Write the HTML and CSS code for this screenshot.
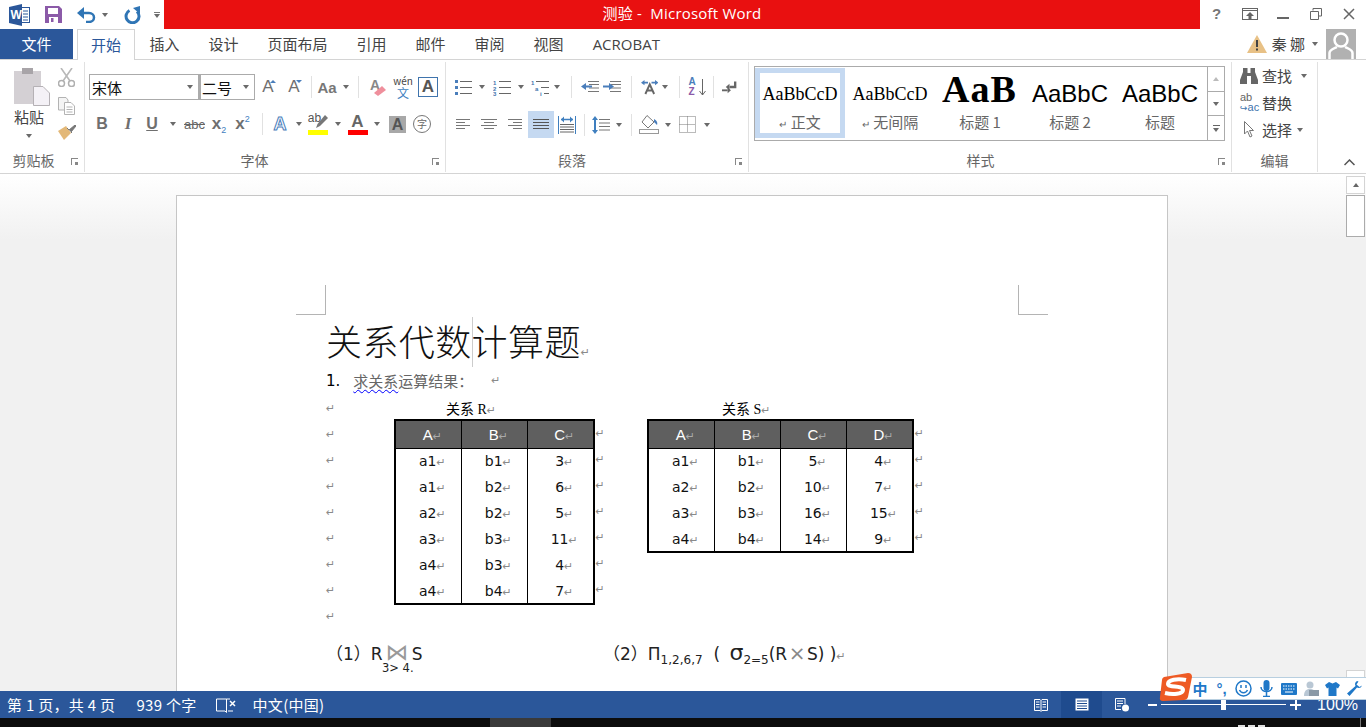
FILE: index.html
```html
<!DOCTYPE html>
<html lang="zh-CN">
<head>
<meta charset="UTF-8">
<title>测验 - Microsoft Word</title>
<link rel="stylesheet" href="styles.css">
</head>
<body>

<!-- title bar -->
<header class="titlebar">
  <div class="qat">
    <svg class="qat-word" width="22" height="22" viewBox="0 0 22 22"><rect x="8.5" y="3.5" width="12" height="15" fill="#fff" stroke="#2b579a"/><path d="M14 7h5M14 10h5M14 13h5M14 16h5" stroke="#2b579a"/><path d="M0 3L13 0V22L0 19Z" fill="#2b579a"/><text x="1.5" y="15" class="qat-w">W</text></svg>
    <svg class="qat-save" width="17" height="17" viewBox="0 0 17 17"><path d="M0 0H14L17 3V17H0Z" fill="#8b5aa8"/><rect x="3" y="2" width="10" height="6" fill="#fff"/><rect x="4" y="11" width="9" height="6" fill="#fff"/><rect x="6" y="12" width="2.500" height="4" fill="#8b5aa8"/></svg>
    <svg class="qat-undo" width="19" height="16" viewBox="0 0 19 16"><path d="M2 6H12C15 6 17 8 17 10.500C17 13 15 15 12 15H9" fill="none" stroke="#2f75b5" stroke-width="2.500"/><path d="M7 0V12L0 6Z" fill="#2f75b5"/></svg>
    <i class="caret qat-caret"></i>
    <svg class="qat-redo" width="17" height="18" viewBox="0 0 17 18"><path d="M5.500 4.500A6.500 6.500 0 1 0 13 5.500" fill="none" stroke="#2f75b5" stroke-width="3"/><path d="M9 2L16 0V8Z" fill="#2f75b5"/></svg>
    <span class="qat-more"><b></b><i class="caret"></i></span>
  </div>
  <div class="title-text">测验 -&nbsp; Microsoft Word</div>
  <div class="winbtns">
    <span class="winbtn win-help">?</span>
    <span class="winbtn"><svg width="16" height="12" viewBox="0 0 16 12"><rect x=".5" y=".5" width="15" height="11" fill="none" stroke="#666"/><path d="M1 2.500H15" stroke="#666"/><path d="M8 4L12 8H9.500V11H6.500V8H4Z" fill="#666"/></svg></span>
    <span class="winbtn"><svg width="12" height="12" viewBox="0 0 12 12"><rect y="9" width="12" height="2" fill="#666"/></svg></span>
    <span class="winbtn"><svg width="12" height="12" viewBox="0 0 12 12"><path d="M3 2.500V.5H11.500V8H9M.5 3.500H8.500V11.500H.5Z" fill="none" stroke="#666"/></svg></span>
    <span class="winbtn"><svg width="12" height="12" viewBox="0 0 12 12"><path d="M1 1L11 11M11 1L1 11" stroke="#666" stroke-width="1.500"/></svg></span>
  </div>
</header>

<!-- tabs -->
<nav class="tabbar">
  <span class="tab-file">文件</span>
  <span class="tab tab-active">开始</span>
  <span class="tab">插入</span>
  <span class="tab">设计</span>
  <span class="tab">页面布局</span>
  <span class="tab">引用</span>
  <span class="tab">邮件</span>
  <span class="tab">审阅</span>
  <span class="tab">视图</span>
  <span class="tab tab-latin">ACROBAT</span>
  <div class="account">
    <svg width="20" height="18" viewBox="0 0 20 18"><path d="M10 0L20 18H0Z" fill="#e8c186"/><rect x="9" y="5" width="2" height="7" fill="#444"/><rect x="9" y="13.500" width="2" height="2" fill="#444"/></svg>
    <span class="account-name">秦 娜</span>
    <i class="caret"></i>
    <svg class="avatar" width="30" height="30" viewBox="0 0 30 30"><rect width="30" height="30" fill="#b1b1b1"/><circle cx="15" cy="11" r="6.500" fill="none" stroke="#fff" stroke-width="2.500"/><path d="M3.500 30V24C3.500 20.500 8 19.500 11 18M26.500 30V24C26.500 20.500 22 19.500 19 18" fill="none" stroke="#fff" stroke-width="2.500"/></svg>
  </div>
</nav>

<!-- ribbon -->
<section class="ribbon">

  <div class="group group-clip">
    <div class="clip-body">
      <div class="paste">
        <svg width="36" height="38" viewBox="0 0 36 38"><rect x="0" y="3" width="27" height="33" fill="#d4d0d4"/><rect x="8" y="0" width="11" height="6" fill="#a8a4a8"/><path d="M19.500 18.500H29L35.500 25V37.500H19.500Z" fill="#f4f1f6" stroke="#b5b1b5"/></svg>
        <span class="paste-label">粘贴</span>
        <i class="caret"></i>
      </div>
      <div class="clip-tools">
        <svg width="17" height="19" viewBox="0 0 17 19"><path d="M3 0L12 13M14 0L5 13" stroke="#b8b8b8" stroke-width="1.600"/><circle cx="3.500" cy="15.500" r="3" fill="none" stroke="#b0b0b0" stroke-width="1.500"/><circle cx="13.500" cy="15.500" r="3" fill="none" stroke="#b0b0b0" stroke-width="1.500"/></svg>
        <svg width="17" height="18" viewBox="0 0 17 18"><path d="M.5.500H8L10 3V13H.5Z" fill="#f4f4f4" stroke="#b3b3b3"/><path d="M6.500 5.500H13L16.500 9V17.500H6.500Z" fill="#fff" stroke="#b3b3b3"/><path d="M8.500 10H14.500M8.500 12.500H14.500M8.500 15H14.500" stroke="#b3b3b3"/></svg>
        <svg width="18" height="15" viewBox="0 0 18 15"><path d="M0 6L8 1L13 8L6 15Z" fill="#e3b878"/><path d="M9 3L11 5L17 0L18 1L13 7L14 8" fill="#777" stroke="#777"/></svg>
      </div>
    </div>
    <div class="group-foot">剪贴板<i class="launcher"></i></div>
  </div>

  <div class="group group-font">
    <div class="tools">
      <div class="row font-row1">
        <div class="combo combo-name"><span>宋体</span><i class="caret"></i></div>
        <div class="combo combo-size"><span>二号</span><i class="caret"></i></div>
        <span class="cell fmt fmt-grow up">A</span>
        <span class="cell fmt fmt-grow down">A</span>
        <span class="cell"><i class="sep"></i></span>
        <span class="cell fmt fmt-aa">Aa</span>
        <span class="cell"><i class="caret"></i></span>
        <span class="cell"><i class="sep"></i></span>
        <span class="cell"><svg width="17" height="19" viewBox="0 0 17 19"><text x="1" y="12" class="svg-a">A</text><path d="M5 15L13 8L17 12L9 18Z" fill="#ef8f9c"/></svg></span>
        <span class="cell wen"><span class="wen-top">wén</span><span class="wen-bot">文</span></span>
        <span class="cell"><span class="fmt fmt-boxa">A</span></span>
      </div>
      <div class="row font-row2">
        <span class="cell fmt fmt-b">B</span>
        <span class="cell fmt fmt-i">I</span>
        <span class="cell fmt fmt-u">U</span>
        <span class="cell"><i class="caret"></i></span>
        <span class="cell fmt-abc">abc</span>
        <span class="cell"><span class="fmt fmt-x">x<sub class="fmt-sub">2</sub></span></span>
        <span class="cell"><span class="fmt fmt-x">x<sup class="fmt-sub">2</sup></span></span>
        <span class="cell"><i class="sep"></i></span>
        <span class="cell fmt fmt-effect">A</span>
        <span class="cell"><i class="caret"></i></span>
        <span class="cell colored"><span class="fmt-ab">ab</span><i class="swatch swatch-y"></i><svg class="pen" width="12" height="13" viewBox="0 0 12 13"><path d="M9 0L12 3L4 11L0 13L1.500 9Z" fill="#777"/></svg></span>
        <span class="cell"><i class="caret"></i></span>
        <span class="cell colored"><span class="fmt fmt-colora">A</span><i class="swatch swatch-r"></i></span>
        <span class="cell"><i class="caret"></i></span>
        <span class="cell"><span class="fmt fmt-shade">A</span></span>
        <span class="cell"><span class="fmt-char">字</span></span>
      </div>
    </div>
    <div class="group-foot">字体<i class="launcher"></i></div>
  </div>

  <div class="group group-para">
    <div class="tools">
      <div class="row para-row1">
        <span class="cell"><svg width="18" height="17" viewBox="0 0 18 17"><path d="M1 1h3v3h-3zM1 7h3v3h-3zM1 13h3v3h-3z" fill="#4a7ebb"/><path d="M6 2.500H18M6 8.500H18M6 14.500H18" stroke="#666"/></svg></span>
        <span class="cell"><i class="caret"></i></span>
        <span class="cell"><svg width="18" height="17" viewBox="0 0 18 17"><text x="0" y="6" class="svg-n">1</text><text x="0" y="11.500" class="svg-n">2</text><text x="0" y="17" class="svg-n">3</text><path d="M6 2.500H18M6 8.500H18M6 14.500H18" stroke="#666"/></svg></span>
        <span class="cell"><i class="caret"></i></span>
        <span class="cell"><svg width="18" height="17" viewBox="0 0 18 17"><text x="0" y="6" class="svg-n">1</text><text x="4" y="11.500" class="svg-n">a</text><text x="9" y="17" class="svg-n">i</text><path d="M5 2.500H18M10 8.500H18M13 14.500H18" stroke="#666"/></svg></span>
        <span class="cell"><i class="caret"></i></span>
        <span class="cell"><i class="sep"></i></span>
        <span class="cell"><svg width="18" height="12" viewBox="0 0 18 12"><path d="M7 .5H18M8 3.500H18M8 7H18M7 10.500H18" stroke="#777"/><path d="M0 5.500L5 2V4.500H11V6.500H5V9Z" fill="#4a7ebb"/></svg></span>
        <span class="cell"><svg width="18" height="12" viewBox="0 0 18 12"><path d="M7 .5H18M8 3.500H18M8 7H18M7 10.500H18" stroke="#777"/><path d="M11 5.500L6 2V4.500H0V6.500H6V9Z" fill="#4a7ebb"/></svg></span>
        <span class="cell"><i class="sep"></i></span>
        <span class="cell"><svg width="20" height="16" viewBox="0 0 20 16"><path d="M5 16L10 5L15 16M7 12H13" fill="none" stroke="#666" stroke-width="2.200"/><path d="M0 3L4 0V2H8V4H4V6ZM20 3L16 0V2H12V4H16V6Z" fill="#4a7ebb"/></svg></span>
        <span class="cell"><i class="caret"></i></span>
        <span class="cell"><i class="sep"></i></span>
        <span class="cell sort"><span class="sort-a">A</span><span class="sort-z">Z</span><svg width="7" height="17" viewBox="0 0 7 17"><path d="M3.500 0V16M.5 12L3.500 16L6.500 12" fill="none" stroke="#666"/></svg></span>
        <span class="cell"><i class="sep"></i></span>
        <span class="cell"><svg width="17" height="13" viewBox="0 0 17 13"><path d="M14 0V6H8" fill="none" stroke="#666" stroke-width="2.500"/><path d="M8 2.500V9.500L4 6Z" fill="#666"/><path d="M0 9.500H6" stroke="#666" stroke-width="2"/><path d="M6 6.500V12.500L9.500 9.500Z" fill="#666"/></svg></span>
      </div>
      <div class="row para-row2">
        <span class="cell"><svg width="14" height="11" viewBox="0 0 14 11"><path d="M0 .5H14M0 3.500H9M0 6.500H14M0 9.500H9" stroke="#777"/></svg></span>
        <span class="cell"><svg width="16" height="11" viewBox="0 0 16 11"><path d="M0 .5H16M3 3.500H13M0 6.500H16M3 9.500H13" stroke="#777"/></svg></span>
        <span class="cell"><svg width="14" height="11" viewBox="0 0 14 11"><path d="M0 .5H14M5 3.500H14M0 6.500H14M5 9.500H14" stroke="#777"/></svg></span>
        <span class="cell cell-on"><svg width="16" height="12" viewBox="0 0 16 12"><path d="M0 .5H16M0 3.500H16M0 6.500H16M0 9.500H16" stroke="#555"/></svg></span>
        <span class="cell"><svg width="18" height="18" viewBox="0 0 18 18"><path d="M.5 0V18M17.500 0V18" stroke="#3f7fbf"/><path d="M3 3.500H15" stroke="#3f7fbf" stroke-width="1.500"/><path d="M3 3.500L6 .5V6.500ZM15 3.500L12 .5V6.500Z" fill="#3f7fbf"/><path d="M2 8.500H16M2 11H16M2 13.500H16M2 16H16" stroke="#666"/></svg></span>
        <span class="cell"><i class="sep"></i></span>
        <span class="cell"><svg width="18" height="18" viewBox="0 0 18 18"><path d="M7 3.500H18M7 7H18M7 10.500H18M7 14H18" stroke="#777"/><path d="M3 0L6 4H4V14H6L3 18L0 14H2V4H0Z" fill="#3f7fbf"/></svg></span>
        <span class="cell"><i class="caret"></i></span>
        <span class="cell"><i class="sep"></i></span>
        <span class="cell"><svg width="20" height="19" viewBox="0 0 20 19"><path d="M8 .5L15 7L9 13L3 7Z" fill="#fff" stroke="#777"/><path d="M15 4C17 5 19 7 18 10L15 7Z" fill="#4a7ebb"/><rect x=".5" y="14.500" width="19" height="4" fill="#fff" stroke="#999"/></svg></span>
        <span class="cell"><i class="caret"></i></span>
        <span class="cell"><svg width="17" height="17" viewBox="0 0 17 17"><path d="M.5.5H16.500V16.500H.5ZM8.500.5V16.500M.5 8.500H16.500" fill="none" stroke="#777" stroke-dasharray="1 1"/></svg></span>
        <span class="cell"><i class="caret"></i></span>
      </div>
    </div>
    <div class="group-foot">段落<i class="launcher"></i></div>
  </div>

  <div class="group group-style">
    <div class="gallery">
      <div class="style-item style-on"><span class="st-sample st-serif">AaBbCcD</span><span class="st-name"><i class="st-mark">↵</i> 正文</span></div>
      <div class="style-item"><span class="st-sample st-serif">AaBbCcD</span><span class="st-name"><i class="st-mark">↵</i> 无间隔</span></div>
      <div class="style-item"><span class="st-sample st-h1">AaB</span><span class="st-name">标题 1</span></div>
      <div class="style-item"><span class="st-sample st-sans">AaBbC</span><span class="st-name">标题 2</span></div>
      <div class="style-item"><span class="st-sample st-sans">AaBbC</span><span class="st-name">标题</span></div>
      <div class="gallery-scroll">
        <span class="gs-btn"><i class="caret caret-up"></i></span>
        <span class="gs-btn"><i class="caret"></i></span>
        <span class="gs-btn gs-more"><b></b><i class="caret"></i></span>
      </div>
    </div>
    <div class="group-foot">样式<i class="launcher"></i></div>
  </div>

  <div class="group group-edit">
    <div class="edit-list">
      <div class="edit-row"><svg width="18" height="17" viewBox="0 0 18 17"><path d="M3 1H7.500V6H10.500V1H15V5L18 13V17H11V9H7V17H0V13L3 5Z" fill="#666"/></svg><span>查找</span><i class="caret caret-find"></i></div>
      <div class="edit-row"><span class="rep"><span>ab</span><span class="rep-ac"><i>↪</i>ac</span></span><span>替换</span></div>
      <div class="edit-row"><svg width="18" height="17" viewBox="0 0 18 17"><path d="M4.500 .5V13L7.500 10L10 16L12 15L9.500 9.500H13.500Z" fill="#fff" stroke="#777"/></svg><span>选择</span><i class="caret"></i></div>
    </div>
    <div class="group-foot">编辑</div>
  </div>

  <svg class="ribbon-collapse" width="11" height="7" viewBox="0 0 11 7"><path d="M.5 6L5.500 1L10.500 6" fill="none" stroke="#555" stroke-width="1.500"/></svg>
</section>

<!-- document -->
<main class="workspace">
  <div class="canvas">
    <article class="page">
      <i class="crop crop-left"></i>
      <i class="crop crop-right"></i>
      <i class="text-cursor"></i>

      <h1 class="doc-title">关系代数计算题<i class="pm">↵</i></h1>
      <p class="doc-line"><span class="doc-num">1.</span><span class="doc-q"><span class="spell">求关系</span>运算结果：</span><i class="pm">↵</i></p>

      <div class="relations">
        <div class="marks marks-left">
          <i class="pm">↵</i><i class="pm">↵</i><i class="pm">↵</i><i class="pm">↵</i><i class="pm">↵</i><i class="pm">↵</i><i class="pm">↵</i><i class="pm">↵</i><i class="pm">↵</i>
        </div>

        <div class="rel rel-r">
          <div class="rel-cap">关系 R<i class="pm">↵</i></div>
          <div class="rel-body">
            <table class="rel-table">
              <tr><th>A<i class="pm">↵</i></th><th>B<i class="pm">↵</i></th><th>C<i class="pm">↵</i></th></tr>
              <tr><td>a1<i class="pm">↵</i></td><td>b1<i class="pm">↵</i></td><td>3<i class="pm">↵</i></td></tr>
              <tr><td>a1<i class="pm">↵</i></td><td>b2<i class="pm">↵</i></td><td>6<i class="pm">↵</i></td></tr>
              <tr><td>a2<i class="pm">↵</i></td><td>b2<i class="pm">↵</i></td><td>5<i class="pm">↵</i></td></tr>
              <tr><td>a3<i class="pm">↵</i></td><td>b3<i class="pm">↵</i></td><td>11<i class="pm">↵</i></td></tr>
              <tr><td>a4<i class="pm">↵</i></td><td>b3<i class="pm">↵</i></td><td>4<i class="pm">↵</i></td></tr>
              <tr><td>a4<i class="pm">↵</i></td><td>b4<i class="pm">↵</i></td><td>7<i class="pm">↵</i></td></tr>
            </table>
            <div class="marks"><i class="pm">↵</i><i class="pm">↵</i><i class="pm">↵</i><i class="pm">↵</i><i class="pm">↵</i><i class="pm">↵</i><i class="pm">↵</i></div>
          </div>
        </div>

        <div class="rel rel-s">
          <div class="rel-cap">关系 S<i class="pm">↵</i></div>
          <div class="rel-body">
            <table class="rel-table">
              <tr><th>A<i class="pm">↵</i></th><th>B<i class="pm">↵</i></th><th>C<i class="pm">↵</i></th><th>D<i class="pm">↵</i></th></tr>
              <tr><td>a1<i class="pm">↵</i></td><td>b1<i class="pm">↵</i></td><td>5<i class="pm">↵</i></td><td>4<i class="pm">↵</i></td></tr>
              <tr><td>a2<i class="pm">↵</i></td><td>b2<i class="pm">↵</i></td><td>10<i class="pm">↵</i></td><td>7<i class="pm">↵</i></td></tr>
              <tr><td>a3<i class="pm">↵</i></td><td>b3<i class="pm">↵</i></td><td>16<i class="pm">↵</i></td><td>15<i class="pm">↵</i></td></tr>
              <tr><td>a4<i class="pm">↵</i></td><td>b4<i class="pm">↵</i></td><td>14<i class="pm">↵</i></td><td>9<i class="pm">↵</i></td></tr>
            </table>
            <div class="marks"><i class="pm">↵</i><i class="pm">↵</i><i class="pm">↵</i><i class="pm">↵</i><i class="pm">↵</i></div>
          </div>
        </div>
      </div>

      <div class="formulas">
        <div class="formula-a">
          <span>（1）R<span class="bowtie">⋈</span>S</span>
          <span class="formula-sub">3&gt; 4.</span>
        </div>
        <div class="formula-b">（2）Π<sub>1,2,6,7</sub>&nbsp;&nbsp;( <span class="sigma">σ</span><sub>2=5</sub>(R<span class="times">×</span>S) )<i class="pm">↵</i></div>
      </div>
    </article>
  </div>

  <aside class="vscroll">
    <span class="vs-btn"><i class="caret caret-up"></i></span>
    <span class="vs-thumb"></span>
    <span class="vs-track"></span>
    <span class="vs-btn"><i class="caret"></i></span>
  </aside>
</main>

<!-- status bar -->
<footer class="statusbar">
  <span class="st-page">第 1 页，共 4 页</span>
  <span class="st-words">939 个字</span>
  <svg class="st-book" width="20" height="16" viewBox="0 0 20 16"><path d="M10.500 2H.5V14H9L10.500 15.500V2M10.500 2H14M17 14H12" fill="none" stroke="#fff"/><path d="M14 4L19 9M19 4L14 9" stroke="#fff" stroke-width="1.500"/></svg>
  <span class="st-lang">中文(中国)</span>
  <div class="st-right">
    <span class="view"><svg width="14" height="14" viewBox="0 0 14 14"><path d="M.5 1.500H6L7 2.500L8 1.500H13.500V12.500H8L7 13.500L6 12.500H.5ZM7 2.500V13M2 4H5.500M2 6.500H5.500M2 9H5.500M8.500 4H12M8.500 6.500H12M8.500 9H12" fill="none" stroke="#fff"/></svg></span>
    <span class="view view-on"><svg width="14" height="13" viewBox="0 0 14 13"><rect x=".5" y=".5" width="13" height="12" fill="#fff"/><path d="M2 3H12M2 5.500H12M2 8H12M2 10.500H12" stroke="#1f4b8e"/></svg></span>
    <span class="view"><svg width="15" height="14" viewBox="0 0 15 14"><path d="M.5.5H10V6M.5.5V11.500H6M2 3H8M2 5.500H8M2 8H6" fill="none" stroke="#fff"/><circle cx="10.500" cy="10" r="3.500" fill="#fff"/></svg></span>
    <span class="zoom-minus"></span>
    <span class="zoom-track"><i class="zoom-thumb"></i></span>
    <span class="zoom-plus"></span>
    <span class="zoom-val">100%</span>
  </div>
</footer>

<div class="taskbar"><span class="task-active"></span><span class="task-clock"><i></i><i></i><i></i></span><i class="task-show"></i></div>

<!-- floating IME bar -->
<div class="ime">
  <svg class="ime-logo" width="34" height="28" viewBox="0 0 34 28"><path d="M5 4L29 0Q33 0 33 4L29 24Q28 27 25 27L4 28Q0 28 1 24L3 7Q3 5 5 4Z" fill="#ee5a24"/><path d="M27 7C18 5 9 7 9 11C9 15 24 12 24 17C24 21 14 22 6 20" fill="none" stroke="#fff" stroke-width="4"/></svg>
  <div class="ime-bar">
    <span class="ime-cell ime-zh">中</span>
    <span class="ime-cell ime-punct">°,</span>
    <span class="ime-cell"><svg width="17" height="17" viewBox="0 0 17 17"><circle cx="8.500" cy="8.500" r="7.500" fill="none" stroke="#1f78c8" stroke-width="1.500"/><path d="M6 5V8M11 5V8" stroke="#1f78c8" stroke-width="1.500"/><path d="M4.500 10C6 13.500 11 13.500 12.500 10" fill="none" stroke="#1f78c8" stroke-width="1.500"/></svg></span>
    <span class="ime-cell"><svg width="13" height="17" viewBox="0 0 13 17"><rect x="3.500" width="6" height="11" rx="3" fill="#1f78c8"/><path d="M1 7C1 13 12 13 12 7M6.500 12V16M3 16.500H10" fill="none" stroke="#1f78c8" stroke-width="1.500"/></svg></span>
    <span class="ime-cell"><svg width="16" height="12" viewBox="0 0 16 12"><rect width="16" height="12" rx="1" fill="#1f78c8"/><path d="M2 3H14M2 6H14" stroke="#fff" stroke-dasharray="1.500 1"/><path d="M4 9H12" stroke="#fff"/></svg></span>
    <span class="ime-cell"><svg width="16" height="15" viewBox="0 0 16 15"><circle cx="7" cy="4" r="3.500" fill="#b9c7d4"/><path d="M1 15C1 9 4 8 7 8C10 8 13 9 13 15Z" fill="#b9c7d4"/><rect x="6" y="9" width="10" height="6" fill="#8a99a6"/></svg></span>
    <span class="ime-cell"><svg width="15" height="14" viewBox="0 0 15 14"><path d="M4 0L7.500 1.500L11 0L15 3L13 6.500L11.500 5.500V14H3.500V5.500L2 6.500L0 3Z" fill="#1f78c8"/></svg></span>
    <span class="ime-cell"><svg width="15" height="15" viewBox="0 0 15 15"><path d="M10 0C8 1 7.500 3 8.500 5L0 12.500L2.500 15L10 6.500C12 7.500 14 7 15 4.500L12.500 6L9.500 3.500L11.500 .5Z" fill="#1f78c8"/></svg></span>
  </div>
</div>

</body>
</html>
```

FILE: styles.css
```css
* { box-sizing: border-box; }

html, body { height: 100%; }

body {
	margin: 0;
	width: 1366px;
	height: 727px;
	overflow: hidden;
	display: flex;
	flex-direction: column;
	position: relative;
	background: #fff;
	color: #444;
	font-family: "Noto Sans CJK SC", "Liberation Sans", sans-serif;
	font-size: 14px;
}

i { font-style: normal; }

.caret {
	display: inline-block;
	width: 0;
	height: 0;
	border-left: 3.5px solid transparent;
	border-right: 3.5px solid transparent;
	border-top: 4px solid #6a6a6a;
	flex: none;
}

.caret-up {
	border-top: 0;
	border-bottom: 4px solid #bbb;
}

/* title bar */
.titlebar {
	height: 29px;
	flex: none;
	display: flex;
}

.qat {
	width: 164px;
	flex: none;
	display: flex;
	align-items: center;
}

.qat-word { margin-left: 9px; }
.qat-w { font: bold 12px "Liberation Sans", sans-serif; fill: #fff; }
.qat-save { margin-left: 14px; }
.qat-undo { margin-left: 15px; }
.qat-caret { margin-left: 6px; }
.qat-redo { margin-left: 16px; }

.qat-more {
	margin-left: 13px;
	display: flex;
	flex-direction: column;
	align-items: center;
	gap: 1px;
}

.qat-more b {
	display: block;
	width: 6px;
	height: 1px;
	background: #777;
}

.title-text {
	flex: 1;
	background: #e91010;
	color: #fff;
	text-align: center;
	font-family: "Open Sans", "Noto Sans CJK SC", sans-serif;
	font-size: 15px;
	letter-spacing: .2px;
	line-height: 27px;
}

.winbtns {
	width: 166px;
	flex: none;
	display: flex;
}

.winbtn {
	width: 33px;
	display: flex;
	align-items: center;
	justify-content: center;
	height: 27px;
}

.win-help {
	font: bold 15px "Liberation Sans", sans-serif;
	color: #777;
}

/* tabs */
.tabbar {
	height: 31px;
	flex: none;
	display: flex;
	align-items: stretch;
	border-bottom: 1px solid #d4d4d4;
	font-size: 15px;
	line-height: 30px;
}

.tab-file {
	width: 73px;
	margin-right: 4px;
	background: #2b579a;
	color: #fff;
	text-align: center;
}

.tab {
	padding: 0 14.5px;
	color: #444;
}

.tab-latin { font-family: "Open Sans", sans-serif; }

.tab-active {
	height: 31px;
	padding: 0 13px;
	background: #fff;
	color: #2b579a;
	border: 1px solid #d4d4d4;
	border-bottom: 0;
}

.account {
	margin-left: auto;
	margin-right: 10px;
	display: flex;
	align-items: center;
	gap: 5px;
	height: 30px;
}

.account-name { margin-right: 2px; font-size: 15px; }
.avatar { display: block; margin-left: 3px; }

/* ribbon */
.ribbon {
	height: 114px;
	flex: none;
	display: flex;
	position: relative;
	border-bottom: 1px solid #d4d4d4;
}

.group {
	display: flex;
	flex-direction: column;
	justify-content: space-between;
	height: 110px;
	margin-top: 2px;
	border-right: 1px solid #e1e1e1;
}

.group-clip { width: 85px; }
.group-font { width: 361px; }
.group-para { width: 303px; }
.group-style { width: 483px; padding-left: 5px; }
.group-edit { width: 86px; }

.group-foot {
	height: 22px;
	position: relative;
	text-align: center;
	font-size: 14px;
	line-height: 20px;
	color: #666;
}

.group-clip .group-foot { padding-right: 17px; }
.group-font .group-foot { padding-right: 21px; }
.group-para .group-foot { padding-right: 50px; }
.group-style .group-foot { padding-right: 24px; }

.launcher {
	position: absolute;
	right: 6px;
	top: 8px;
	width: 7px;
	height: 7px;
	border-top: 1px solid #888;
	border-left: 1px solid #888;
}

.launcher::after {
	content: "";
	position: absolute;
	right: 0;
	bottom: 0;
	width: 3px;
	height: 3px;
	background: #888;
}

.tools {
	padding-top: 12px;
	display: flex;
	flex-direction: column;
	gap: 11px;
}

.row {
	display: grid;
	height: 26px;
	align-items: center;
}

.cell {
	display: flex;
	align-items: center;
	justify-content: center;
	height: 26px;
	position: relative;
}

.cell-on { background: #c5d9f1; height: 27px; }

.sep {
	display: block;
	width: 1px;
	height: 22px;
	background: #e1e1e1;
}

/* clipboard */
.clip-body {
	display: flex;
	padding-top: 6px;
}

.paste {
	width: 58px;
	display: flex;
	flex-direction: column;
	align-items: center;
}

.paste svg { display: block; margin-left: 6px; }
.paste-label { font-size: 15px; line-height: 20px; margin-top: 1px; color: #444; }
.paste .caret { margin-top: 7px; }

.clip-tools {
	display: flex;
	flex-direction: column;
	align-items: flex-start;
	gap: 10px;
}

/* font */
.group-font .tools { padding-left: 4px; }

.font-row1 { grid-template-columns: 110px 56px 26px 26px 8px 24px 14px 10px 28px 24px 26px; }
.font-row2 { grid-template-columns: 26px 26px 22px 20px 23px 26px 21px 18px 18px 19px 20px 20px 19px 19px 23px 26px; }

.combo {
	height: 26px;
	border: 1px solid #ababab;
	display: flex;
	align-items: center;
	justify-content: space-between;
	padding: 0 5px 0 2px;
	font-size: 15px;
	color: #111;
}

.combo-size { border-left: 2px solid #ababab; padding-left: 1px; }

.fmt {
	font-family: "Liberation Sans", sans-serif;
	font-weight: bold;
	font-size: 16px;
	color: #6f6f6f;
}

.fmt-grow { font-weight: normal; font-size: 17px; }

.fmt-grow::after {
	content: "";
	position: absolute;
	top: 6px;
	right: 5px;
	border-left: 3px solid transparent;
	border-right: 3px solid transparent;
}

.up::after { border-bottom: 3px solid #4a7ebb; }
.down::after { border-top: 3px solid #4a7ebb; }
.fmt-aa { font-size: 15px; color: #777; }
.svg-a { font: bold 14px "Liberation Sans", sans-serif; fill: #888; }

.wen { flex-direction: column; }
.wen-top { font-size: 10px; line-height: 10px; color: #444; }
.wen-bot { font-size: 12px; line-height: 13px; color: #3f7fbf; }

.fmt-boxa {
	width: 20px;
	height: 20px;
	line-height: 18px;
	text-align: center;
	border: 1px solid #3f74ad;
	color: #555;
	font-size: 17px;
}

.fmt-i { font-style: italic; font-family: "Liberation Serif", serif; font-size: 17px; }
.fmt-u { text-decoration: underline; }
.fmt-x { font-size: 17px; }

.fmt-abc {
	font: 13px "Liberation Sans", sans-serif;
	color: #666;
	text-decoration: line-through;
}

.fmt-sub {
	color: #3f7fbf;
	font-size: 9px;
	font-weight: normal;
	line-height: 0;
}

.fmt-effect {
	font-size: 18px;
	color: #fff;
	-webkit-text-stroke: 1px #4a7ebb;
}

.colored { flex-direction: column; justify-content: flex-start; padding-top: 1px; }

.swatch {
	position: absolute;
	bottom: 2px;
	left: 0;
	right: 0;
	height: 5px;
	margin: 0 auto;
	width: 20px;
}

.swatch-y { background: #ffff00; }
.swatch-r { background: #ff0000; }
.fmt-ab { font: 12px/13px "Liberation Sans", sans-serif; color: #555; margin-right: 7px; }
.pen { position: absolute; right: 0; top: 4px; }
.fmt-colora { font-size: 17px; line-height: 19px; color: #666; }

.fmt-shade {
	width: 17px;
	height: 17px;
	background: #a8a8a8;
	text-align: center;
	line-height: 17px;
	color: #555;
}

.fmt-char {
	width: 18px;
	height: 18px;
	line-height: 15px;
	border: 1px solid #777;
	border-radius: 50%;
	text-align: center;
	font-size: 10px;
	color: #666;
}

/* paragraph */
.para-row1 {
	padding-left: 8px;
	grid-template-columns: 18.5px 19.5px 19.5px 19.5px 18.5px 14.5px 15px 22px 21.5px 18px 17.500px 14px 15.5px 18px 16.5px 16px;
}

.para-row2 {
	padding-left: 4px;
	grid-template-columns: 26px 26px 26px 26px 26px 8px 26px 10px 14px 22px 16px 22px 18px;
}

.svg-n { font: bold 6px "Liberation Sans", sans-serif; fill: #3f74ad; }

.sort-a, .sort-z {
	position: absolute;
	left: 1px;
	font: bold 10px/10px "Liberation Sans", sans-serif;
}

.sort-a { top: 3px; color: #4a7ebb; }
.sort-z { top: 13px; color: #8b5aa8; }
.sort svg { margin-left: 11px; }

/* styles gallery */
.gallery {
	display: flex;
	width: 471px;
	height: 75px;
	margin-top: 4px;
	border: 1px solid #ababab;
}

.style-item {
	width: 90px;
	height: 73px;
	overflow: hidden;
	display: flex;
	flex-direction: column;
	align-items: center;
	padding-top: 7px;
	border: 5px solid transparent;
	border-top-width: 1px;
	border-bottom-width: 1px;
}

.style-on {
	border: 5px solid #c5d9f1;
	padding-top: 2px;
	height: 70px;
	margin-top: 1px;
}

.st-sample {
	height: 38px;
	flex: none;
	display: flex;
	align-items: center;
	justify-content: center;
	white-space: nowrap;
	color: #000;
	width: 80px;
	overflow: hidden;
}

.st-serif { font: 18px "Liberation Serif", serif; }

.st-h1 {
	font: bold 38px "Liberation Serif", serif;
	justify-content: flex-start;
	letter-spacing: 1px;
	width: 76px;
	padding-bottom: 10px;
}

.st-sans { font: 24px "Liberation Sans", sans-serif; }

.st-name {
	font-size: 15px;
	line-height: 20px;
	color: #666;
	margin-top: -1px;
}

.st-mark { font-size: 10px; }

.gallery-scroll {
	width: 17px;
	margin-left: auto;
	border-left: 1px solid #ababab;
	display: flex;
	flex-direction: column;
}

.gs-btn {
	flex: 1;
	display: flex;
	flex-direction: column;
	align-items: center;
	justify-content: center;
	gap: 2px;
	border-bottom: 1px solid #ababab;
}

.gs-more { border-bottom: 0; }

.gs-more b {
	width: 7px;
	height: 1px;
	background: #666;
}

/* editing */
.edit-list {
	padding: 0 0 0 8px;
	display: flex;
	flex-direction: column;
}

.edit-row {
	height: 27px;
	display: flex;
	align-items: center;
	gap: 4px;
	font-size: 15px;
	color: #444;
}

.edit-row .caret { margin-left: 1px; }
.edit-row .caret-find { margin-left: 5px; }

.rep {
	width: 18px;
	font: 11px/10px "Liberation Sans", sans-serif;
	color: #666;
	display: flex;
	flex-direction: column;
}

.rep-ac { color: #3f74ad; white-space: nowrap; }
.rep-ac i { font: 9px "DejaVu Sans", sans-serif; }

.ribbon-collapse {
	position: absolute;
	left: 1344px;
	top: 99px;
}

/* document */
.workspace {
	height: 517px;
	flex: none;
	display: flex;
	overflow: hidden;
	background: linear-gradient(#fff, #f1f1f1 66px);
}

.canvas {
	flex: 1;
	padding: 21px 0 0 176px;
	overflow: hidden;
}

.page {
	width: 992px;
	height: 700px;
	position: relative;
	background: #fff;
	border: 1px solid #c6c6c6;
	padding: 119px 0 0 149px;
	font-family: "Noto Sans CJK SC", sans-serif;
	color: #222;
}

.crop {
	position: absolute;
	top: 89px;
	width: 30px;
	height: 30px;
	border-bottom: 1px solid #b4b4b4;
}

.crop-left { left: 119px; border-right: 1px solid #b4b4b4; }
.crop-right { left: 841px; border-left: 1px solid #b4b4b4; }

.text-cursor {
	position: absolute;
	left: 295px;
	top: 121px;
	width: 1px;
	height: 50px;
	background: #ccc;
}

.pm {
	font-family: "DejaVu Sans", sans-serif;
	font-size: 11px;
	color: #8a8a8a;
	font-weight: normal;
}

.doc-title {
	margin: 0;
	height: 53px;
	font-size: 36px;
	font-weight: 300;
	letter-spacing: .4px;
	line-height: 50px;
	color: #111;
}

.doc-line {
	margin: 0;
	height: 26px;
	line-height: 26px;
	font-size: 15px;
	display: flex;
	align-items: center;
	gap: 13px;
}

.doc-line .pm { margin-left: 5px; }
.doc-num { font-family: "DejaVu Sans", sans-serif; color: #000; }
.doc-q { color: #666; }

.spell {
	text-decoration: underline wavy #0000ff 1px;
	text-underline-offset: 2px;
}

.relations {
	display: flex;
	margin-top: 2px;
}

.marks {
	display: flex;
	flex-direction: column;
	align-items: flex-start;
}

.marks .pm { height: 26px; line-height: 26px; }
.marks-left { width: 68px; }

.rel-cap {
	height: 23px;
	line-height: 27px;
	font-size: 14px;
	font-family: "Liberation Serif", "Noto Sans CJK SC", serif;
	color: #000;
}

.rel-r { width: 253px; }
.rel-r .rel-cap { padding-left: 52px; }
.rel-s .rel-cap { padding-left: 75px; }

.rel-body { display: flex; gap: 1px; }
.rel-body .marks { padding-top: 2px; }

.rel-table {
	border-collapse: collapse;
	border: 2px solid #000;
	table-layout: fixed;
	font-family: "DejaVu Sans", sans-serif;
	font-size: 14px;
	color: #111;
}

.rel-table th, .rel-table td {
	width: 66.2px;
	height: 26px;
	padding: 0 0 0 8px;
	text-align: center;
	border-left: 1px solid #000;
	font-weight: normal;
}

.rel-table th {
	height: 28px;
	background: #5f5f5f;
	color: #fff;
	font-family: "Liberation Sans", sans-serif;
	font-size: 15px;
	border-bottom: 1px solid #000;
}

.rel-table th .pm { color: #aaa; }

.formulas {
	display: flex;
	margin-top: 13px;
	font-family: "DejaVu Sans", "Noto Sans CJK SC", sans-serif;
	font-size: 17px;
	color: #222;
}

.formula-a {
	width: 277px;
	display: flex;
	flex-direction: column;
	line-height: 22px;
}

.bowtie { color: #999; font-size: 23px; line-height: 0; margin: 0 3px; }

.formula-sub {
	font-size: 11.5px;
	line-height: 10px;
	padding-left: 56px;
	margin-top: -2px;
}

.formula-b { line-height: 22px; }
.formula-b sub { font-size: 12px; line-height: 0; }
.sigma { font-size: 22px; line-height: 0; margin-left: 4px; }
.times { font-size: 20px; line-height: 0; color: #888; margin: 0 1.5px; }

.vscroll {
	width: 21px;
	flex: none;
	padding-top: 2px;
	display: flex;
	flex-direction: column;
	align-items: flex-end;
	padding-right: 1px;
}

.vs-btn {
	width: 19px;
	height: 18px;
	display: flex;
	align-items: center;
	justify-content: center;
	flex: none;
	background: #fff;
	border: 1px solid #d4d4d4;
}

.vs-btn .caret-up { border-bottom-color: #666; }

.vs-thumb {
	width: 19px;
	height: 42px;
	margin-top: 1px;
	flex: none;
	background: #fff;
	border: 1px solid #ababab;
}

.vs-track { height: 433px; flex: none; }

/* status bar */
.statusbar {
	height: 27px;
	flex: none;
	display: flex;
	align-items: center;
	background: #2b579a;
	color: #fff;
	font-size: 15px;
	letter-spacing: .3px;
	padding-left: 7px;
}

.st-words { margin-left: 21px; }
.st-book { margin-left: 19px; }
.st-lang { margin-left: 17px; }

.st-right {
	margin-left: auto;
	display: flex;
	align-items: center;
	height: 27px;
	padding-right: 8px;
}

.view {
	width: 41px;
	height: 27px;
	display: flex;
	align-items: center;
	justify-content: center;
}

.view-on { background: #1f4b8e; }

.zoom-minus {
	width: 9px;
	height: 2px;
	background: #fff;
	margin-left: 5px;
}

.zoom-track {
	width: 125px;
	height: 1px;
	background: #fff;
	margin-left: 4px;
	position: relative;
}

.zoom-thumb {
	position: absolute;
	left: 60px;
	top: -5px;
	width: 5px;
	height: 11px;
	background: #fff;
}

.zoom-plus {
	width: 11px;
	height: 11px;
	margin-left: 4px;
	background:
		linear-gradient(#fff, #fff) center / 11px 2px no-repeat,
		linear-gradient(#fff, #fff) center / 2px 11px no-repeat;
}

.zoom-val { margin-left: 16px; font: 16px "Liberation Sans", sans-serif; letter-spacing: 0; }

.taskbar {
	flex: 1;
	background: #0c0c0c;
	display: flex;
	overflow: hidden;
}

.task-active {
	width: 61px;
	margin-left: 490px;
	background: #3a3a3a;
}

.task-clock {
	margin-left: 687px;
	width: 28px;
	display: flex;
	gap: 3px;
	padding-top: 7px;
}

.task-clock i {
	width: 7px;
	height: 2px;
	background: #ddd;
}

.task-show {
	width: 1px;
	background: #777;
	margin-left: 94px;
}

/* sogou IME, floats over the window */
.ime {
	position: absolute;
	left: 1159px;
	top: 673px;
	display: flex;
	align-items: flex-start;
}

.ime-logo {
	position: relative;
	z-index: 1;
	flex: none;
}

.ime-bar {
	width: 185px;
	height: 23px;
	margin-left: -12px;
	margin-top: 4px;
	background: #fff;
	border: 1px solid #b8cfe0;
	border-right: 0;
	display: grid;
	grid-template-columns: 22px 21px 23px 22px 23px 22px 21px 23px;
	padding-left: 7px;
}

.ime-cell {
	display: flex;
	align-items: center;
	justify-content: center;
}

.ime-zh { color: #1f78c8; font-weight: bold; font-size: 15px; }
.ime-punct { color: #1f78c8; font: bold 15px "Liberation Sans", sans-serif; }
```
